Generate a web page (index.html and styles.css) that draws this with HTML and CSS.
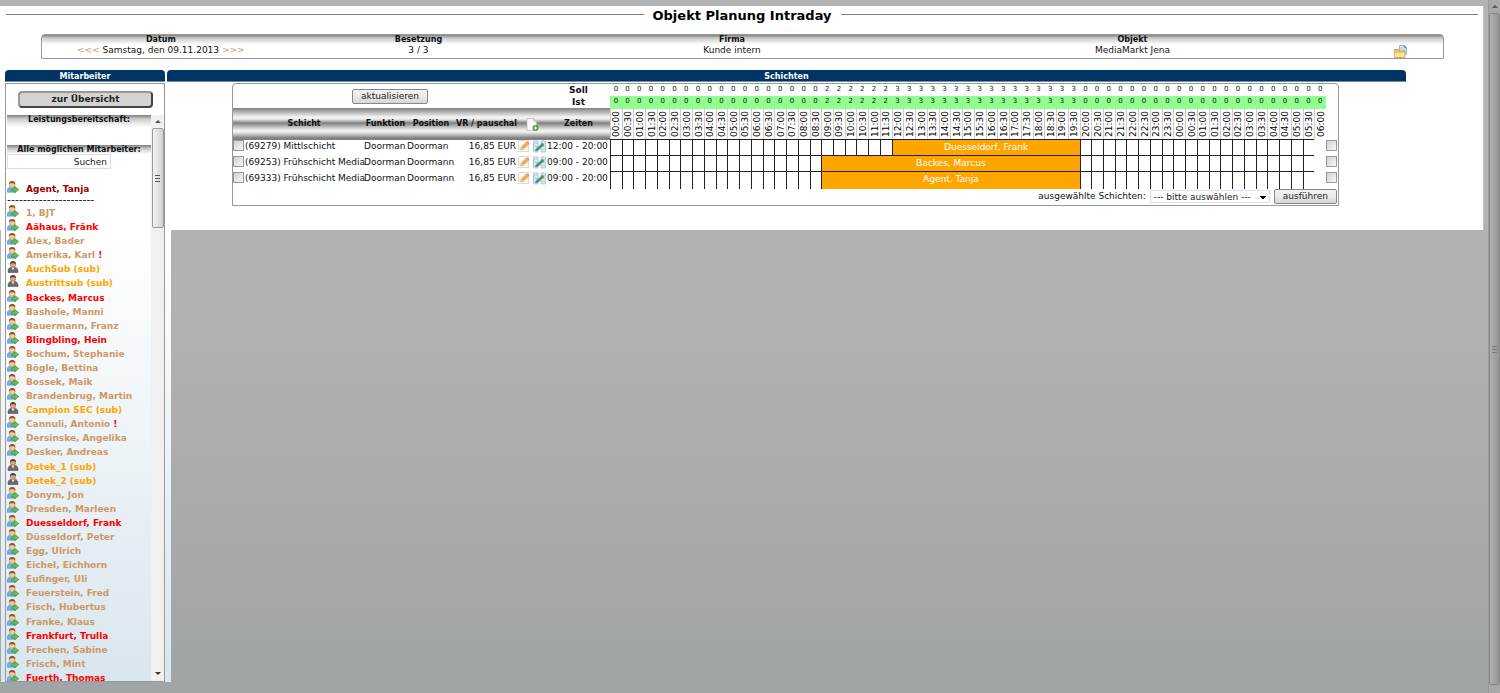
FILE: index.html
```html
<!DOCTYPE html>
<html lang="de">
<head>
<meta charset="utf-8">
<title>Objekt Planung Intraday</title>
<link rel="stylesheet" href="styles.css">
</head>
<body>
<svg class="sprite" aria-hidden="true">
  <symbol id="i-user" viewBox="0 0 12 12">
    <path d="M0.3 11.2C0 8 1.2 6.4 3 6h3.5c1.6.5 2.4 2 2.3 5.2z" fill="#6fb0ee" stroke="#3f7cc0" stroke-width=".5"/>
    <path d="M3.4 6l1.4 2.600L6.300 6z" fill="#fff"/>
    <circle cx="5.200" cy="3.600" r="2.900" fill="#f4c9a2" stroke="#a06a3c" stroke-width=".4"/>
    <path d="M2 3.600C1.800 1 3.300.1 5.200.1S8.500 1 8.300 3.500C7.300 2.200 5.800 2 5 2.200 3.800 2 2.700 2.400 2 3.600z" fill="#93531f"/>
    <path d="M4.500 7.300h3.200V5.400L11.800 8.600 7.700 11.800V10H4.500z" fill="#6cbd50" stroke="#3c8a30" stroke-width=".6"/>
  </symbol>
  <symbol id="i-sub" viewBox="0 0 12 12">
    <path d="M1 11.500C.8 8 2.200 6.600 4 6.200h4c1.800.4 3.200 1.800 3 5.300z" fill="#6a6a6a" stroke="#444" stroke-width=".5"/>
    <path d="M4.400 6.200L6 9.500l1.600-3.300z" fill="#e8e8e8"/>
    <circle cx="6" cy="3.600" r="2.700" fill="#d9a982" stroke="#6b4630" stroke-width=".4"/>
    <path d="M3 3.700C2.800 1 4.300.1 6 .1S9.100 1 9 3.600C8.300 2.300 6.800 2.200 6 2.300 4.800 2.200 3.700 2.500 3 3.700z" fill="#5f3a24"/>
  </symbol>
  <symbol id="i-new" viewBox="0 0 12 13">
    <path d="M.5.5h6.500L10 3.500v9H.5z" fill="#fbfbfb" stroke="#b5b5b5" stroke-width=".7"/>
    <path d="M7 .5v3h3z" fill="#ddd" stroke="#b5b5b5" stroke-width=".5"/>
    <circle cx="9" cy="10" r="2.700" fill="#5fa83e" stroke="#3c7d22" stroke-width=".5"/>
    <path d="M9 8.500v3M7.500 10h3" stroke="#fff" stroke-width="1"/>
  </symbol>
  <symbol id="i-edit" viewBox="0 0 12 12">
    <path d="M.5.5h10v11H.5z" fill="#fafafa" stroke="#c8c8c8" stroke-width=".7"/>
    <path d="M2.500 9.800L3.300 7.200 8.800 1.700 11 3.800 5.300 9.300z" fill="#f5b043" stroke="#c98525" stroke-width=".5"/>
    <path d="M8.300 2.200l.9-.9 2.200 2.100-.9.900z" fill="#e58a78"/>
    <path d="M2.500 9.800l.8-2.600 2 2.100z" fill="#eed9b2"/>
  </symbol>
  <symbol id="i-sheet" viewBox="0 0 13 12">
    <path d="M.5.500h4.500v11H.5zM8 .5h4.500v11H8z" fill="#d6e7f8" stroke="#86aede" stroke-width=".6"/>
    <path d="M.5 3h4.500M.5 6h4.500M.5 9h4.500M8 3h4.500M8 6h4.500M8 9h4.500" stroke="#9dbfe6" stroke-width=".6"/>
    <path d="M2.500 10.500L3.500 8 9.500 2.800 11 4.300 5 9.800z" fill="#4d9d55" stroke="#2c6f38" stroke-width=".5"/>
  </symbol>
  <symbol id="i-folder" viewBox="0 0 13 13">
    <path d="M5.500.5h5L12.500 2.500v7h-7z" fill="#c5dcf7" stroke="#6f9fdd" stroke-width=".7"/>
    <path d="M10.200.5v2.300h2.300z" fill="#3f6fb5"/>
    <path d="M.5 4.500h4l1 1.500h5.500v6.500H.5z" fill="#f0c65c" stroke="#c8962f" stroke-width=".7"/>
    <path d="M1 8h9.500v4H1z" fill="#fbe39a"/>
  </symbol>
</svg>
<div class="shell">
  <div class="page">
    <header class="title"><h1>Objekt Planung Intraday</h1></header>
    <section class="info">
      <div><b>Datum</b><p><a href="#">&lt;&lt;&lt;</a> Samstag, den 09.11.2013 <a href="#">&gt;&gt;&gt;</a></p></div>
      <div><b>Besetzung</b><p>3 / 3</p></div>
      <div><b>Firma</b><p>Kunde intern</p></div>
      <div><b>Objekt</b><p>MediaMarkt Jena</p></div>
      <div class="info-action"><button class="icon-btn" aria-label="Ordner"><svg class="ico13"><use href="#i-folder"/></svg></button></div>
    </section>
    <div class="columns">
      <aside class="sidebar">
        <h2 class="bar">Mitarbeiter</h2>
        <div class="staff">
          <button class="overview">zur Übersicht</button>
          <div class="scroller">
            <div class="staff-body">
              <h3 class="band ready">Leistungsbereitschaft:</h3>
              <h3 class="band">Alle möglichen Mitarbeiter:</h3>
              <input class="search" type="text" value="Suchen" aria-label="Suchen">
              <a class="person own" href="#"><svg class="ico"><use href="#i-user"/></svg><span>Agent, Tanja</span></a>
              <div class="dashes">----------------------</div>
              <div class="people" id="people"></div>
            </div>
            <div class="track"><i class="up"></i><i class="thumb"></i><i class="down"></i></div>
          </div>
        </div>
      </aside>
      <main class="main">
        <h2 class="bar">Schichten</h2>
        <div class="panel">
          <table class="plan">
            <thead id="head"></thead>
            <tbody id="rows"></tbody>
          </table>
          <button class="btn refresh">aktualisieren</button>
          <div class="foot">
            <label for="act">ausgewählte Schichten:</label>
            <select id="act"><option>--- bitte auswählen ---</option></select>
            <button class="btn">ausführen</button>
          </div>
        </div>
      </main>
    </div>
  </div>
  <div class="outer-track"><i class="up"></i><i class="thumb"></i></div>
</div>
<script src="script.js"></script>
</body>
</html>
```
FILE: styles.css
```css
* { box-sizing: border-box; }
body {
  margin: 0;
  height: 100vh;
  overflow: hidden;
  font: 9px/12px "DejaVu Sans", Verdana, sans-serif;
  color: #111;
  background: linear-gradient(#b3b3b3, #b1b2b2 45%, #9fa4a7);
}
h1, h2, h3, p { margin: 0; font-size: inherit; }
a { color: #cc9966; text-decoration: none; }
button, input, select { font: inherit; color: #222; }
.sprite { position: absolute; width: 0; height: 0; }
.ico { width: 12px; height: 12px; display: block; flex: none; }
.ico13 { width: 13px; height: 13px; display: block; }
.icon-btn { border: 0; background: none; padding: 0; }

.shell { display: flex; height: 100%; }
.page {
  flex: 1;
  height: 224px;
  margin: 6px 4px 0 0;
  background: #fff;
  border-right: 1px solid #c4c4c4;
}
.title { display: flex; align-items: center; gap: 9px; height: 20px; padding: 0 5px 0 6px; }
.title::before, .title::after { content: ""; flex: 1; height: 1px; background: #808080; margin-bottom: 4px; }
.title h1 { font-size: 13px; line-height: 20px; color: #000; }

.info {
  display: grid;
  grid-template-columns: 238fr 278fr 350fr 452fr 85fr;
  height: 25px;
  margin: 8px 39px 11px 41px;
  border: 1px solid #999;
  border-radius: 4px 4px 0 0;
  text-align: center;
  background: linear-gradient(#808380, #c8c8c8 3px, #f4f4f4 8px, #fff 10px);
}
.info b { display: block; font-size: 8px; line-height: 10px; }
.info p { line-height: 10px; }
.info-action { display: flex; justify-content: center; align-items: flex-end; }

.columns { display: flex; gap: 2px; padding-left: 5px; height: calc(100vh - 81px); }
.bar {
  height: 12px;
  border-radius: 4px 4px 0 0;
  background: #003366;
  border-bottom: 1px solid #6f8ba8;
  color: #fff;
  font-size: 8px;
  line-height: 13px;
  text-align: center;
}
.sidebar { width: 160px; display: flex; flex-direction: column; position: relative; }
.sidebar::before {
  content: "";
  position: absolute;
  left: -4px;
  right: -6px;
  top: 160px;
  bottom: 0;
  background: linear-gradient(#fff, #d9e6ee);
}
.staff {
  position: relative;
  flex: 1;
  min-height: 0;
  margin-top: 1px;
  display: flex;
  flex-direction: column;
  border: 1px solid #999;
  background: linear-gradient(#fff 25%, #d9e6ee);
}
.overview {
  height: 17px;
  margin: 7px 11px 7px 12px;
  padding: 0;
  border: 2px outset #999;
  border-radius: 4px;
  background: #d3d3d3;
  font-weight: bold;
  line-height: 13px;
}
.scroller { flex: 1; min-height: 0; display: flex; }
.staff-body { flex: 1; min-width: 0; overflow: hidden; padding-left: 1px; display: flex; flex-direction: column; }
.band {
  height: 9px;
  font-size: 8px;
  line-height: 10px;
  text-align: center;
  background: linear-gradient(#808080, #ccc 4px, #fff);
}
.ready { height: 12px; margin-bottom: 18px; }
.search { width: 104px; height: 15px; padding: 0 3px; border: 1px solid #dde; background: #fff; text-align: right; }
.person { display: flex; gap: 7px; font-weight: bold; color: #cc9966; white-space: nowrap; }
.person span { padding-top: 2px; }
.person em { font-style: normal; color: #f00020; }
.own { margin-top: 12px; color: #900; }
.dashes { height: 10px; line-height: 9px; font-size: 11px; }
.people { flex: 1; min-height: 0; display: grid; grid-auto-rows: 1fr; margin-bottom: -3px; }
.people .person { height: 14px; }
.people .red { color: #f00; }
.people .orange { color: #ffa500; }
.track { width: 13px; background: #f0f0f0; display: flex; flex-direction: column; align-items: center; }
.up, .down { width: 0; height: 0; border: 3px solid transparent; }
.up { border-bottom-color: #555; margin: 2px 0 5px; }
.down { border-top-color: #333; margin: auto 0 3px; }
.thumb {
  width: 12px;
  height: 100px;
  border: 1px solid #999;
  border-radius: 2px;
  background: repeating-linear-gradient(#555 0 1px, transparent 1px 3px) center / 5px 7px no-repeat, linear-gradient(90deg, #f4f4f4, #d0d0d4);
}

.main { flex: 1; min-width: 0; padding-right: 77px; }
.panel {
  position: relative;
  margin: 1px 67px 0 65px;
  border: 1px solid #999;
  border-radius: 4px 4px 0 0;
}
.plan { display: block; }
.plan thead, .plan tbody { display: block; }
.plan tr {
  display: grid;
  grid-template-columns: 12px 119px 43px 48px 63px 15px 14px 63px repeat(61, minmax(0, 1fr)) 12px;
}
.plan td, .plan th { padding: 0; white-space: nowrap; }
.counts { height: 12px; }
.counts th { font-size: 9px; line-height: 13px; text-align: center; grid-column: 8; }
.counts td { font-size: 7px; line-height: 11px; text-align: center; }
.counts .on { background: #90ff90; }
.times { height: 31px; }
.times .h {
  font-size: 8px;
  line-height: 32px;
  text-align: center;
  background: linear-gradient(#808080, #f4f4f4 9px, #eee 11px, #808080 15px, #eee 22px, #f0f0f0 24px, #808080 30px);
}
.times .h svg { margin: 10px auto 0; }
.wide { grid-column: span 2; }
.slot { display: flex; align-items: center; justify-content: center; border-left: 1px solid #ccc; }
.slot span { writing-mode: vertical-rl; transform: rotate(180deg); font-weight: normal; font-size: 9px; line-height: 10px; color: #000; }
.shift { height: 16px; line-height: 14px; }
.shift .cell, .shift .work { border-left: 1px solid #222; border-top: 1px solid #222; }
.shift .work { background: #ffa500; color: #fff; text-align: center; }
.shift .num { text-align: right; padding-right: 2px; }
.shift svg { margin-top: 1px; }
.shift input {
  appearance: none;
  display: block;
  width: 11px;
  height: 11px;
  margin: 1px 0 0;
  border: 1px solid #999;
  background: linear-gradient(135deg, #ccd0d6, #f8f8f8);
}
.btn {
  height: 15px;
  padding: 0 8px;
  border: 1px solid #888;
  border-radius: 2px;
  background: linear-gradient(#f3f3f3, #ebebeb 50%, #d5d5d5);
  line-height: 13px;
}
.refresh { position: absolute; left: 119px; top: 5px; }
.foot { display: flex; justify-content: flex-end; align-items: center; gap: 4px; height: 18px; padding-right: 1px; }
.foot select {
  appearance: none;
  width: 120px;
  height: 13px;
  padding: 0 3px;
  border: 1px solid #dde;
  background: linear-gradient(#000, #000) 109px 5px / 6px 1px no-repeat, linear-gradient(#000, #000) 110px 6px / 4px 1px no-repeat, linear-gradient(#000, #000) 111px 7px / 2px 1px no-repeat, #fff;
}
.outer-track {
  width: 12px;
  display: flex;
  flex-direction: column;
  align-items: center;
  background: #a9a9a9;
  border-left: 1px solid #999;
}
.outer-track .thumb {
  flex: 1;
  width: 11px;
  height: auto;
  margin-bottom: 8px;
  border-color: #888;
  background: repeating-linear-gradient(#777 0 1px, transparent 1px 3px) center / 5px 7px no-repeat, linear-gradient(90deg, #b0b0b0, #949494);
}
```
FILE: script.js
```js
const people = `1, BJT|t
Aähaus, Fränk|r
Alex, Bader|t
Amerika, Karl|t!
AuchSub (sub)|s
Austrittsub (sub)|s
Backes, Marcus|r
Bashole, Manni|t
Bauermann, Franz|t
Blingbling, Hein|r
Bochum, Stephanie|t
Bögle, Bettina|t
Bossek, Maik|t
Brandenbrug, Martin|t
Campion SEC (sub)|s
Cannuli, Antonio|t!
Dersinske, Angelika|t
Desker, Andreas|t
Detek_1 (sub)|s
Detek_2 (sub)|s
Donym, Jon|t
Dresden, Marleen|t
Duesseldorf, Frank|r
Düsseldorf, Peter|t
Egg, Ulrich|t
Eichel, Eichhorn|t
Eufinger, Uli|t
Feuerstein, Fred|t
Fisch, Hubertus|t
Franke, Klaus|t
Frankfurt, Trulla|r
Frechen, Sabine|t
Frisch, Mint|t
Fuerth, Thomas|r`.split('\n');

document.getElementById('people').innerHTML = people.map(line => {
  const [name, kind] = line.split('|');
  const cls = kind[0] === 'r' ? ' red' : kind[0] === 's' ? ' orange' : '';
  const icon = kind[0] === 's' ? 'i-sub' : 'i-user';
  const mark = kind.endsWith('!') ? ' <em>!</em>' : '';
  return `<a class="person${cls}" href="#"><svg class="ico"><use href="#${icon}"/></svg><span>${name}${mark}</span></a>`;
}).join('');

const slots = Array.from({ length: 61 }, (_, i) => i);
const staffed = i => (i >= 18 && i < 24 ? 2 : i >= 24 && i < 40 ? 3 : 0);
const label = i => String(Math.floor(i / 2) % 24).padStart(2, '0') + (i % 2 ? ':30' : ':00');
const counts = (name, cls) => `<tr class="counts"><th>${name}</th>${slots.map(i => `<td class="${cls}">${staffed(i)}</td>`).join('')}</tr>`;

document.getElementById('head').innerHTML = counts('Soll', '') + counts('Ist', 'on') +
  `<tr class="times"><th class="h wide">&nbsp;&nbsp;&nbsp;&nbsp;Schicht</th><th class="h">Funktion</th><th class="h">Position</th><th class="h">VR / pauschal</th><th class="h wide"><svg class="ico13"><use href="#i-new"/></svg></th><th class="h">Zeiten</th>` +
  slots.map(i => `<th class="slot"><span>${label(i)}</span></th>`).join('') + '</tr>';

const shifts = [
  ['(69279) Mittlschicht', 'Doorman', '12:00 - 20:00', 24, 'Duesseldorf, Frank'],
  ['(69253) Frühschicht Media', 'Doormann', '09:00 - 20:00', 18, 'Backes, Marcus'],
  ['(69333) Frühschicht Media', 'Doormann', '09:00 - 20:00', 18, 'Agent, Tanja']
];
const cells = n => '<td class="cell"></td>'.repeat(n);
document.getElementById('rows').innerHTML = shifts.map(([name, pos, time, from, who]) =>
  `<tr class="shift"><td><input type="checkbox" aria-label="${name}"></td><td>${name}</td><td>Doorman</td><td>${pos}</td><td class="num">16,85 EUR</td>` +
  `<td><button class="icon-btn" aria-label="Bearbeiten"><svg class="ico"><use href="#i-edit"/></svg></button></td><td><button class="icon-btn" aria-label="Tabelle"><svg class="ico13"><use href="#i-sheet"/></svg></button></td><td>${time}</td>` +
  cells(from) + `<td class="work" style="grid-column: span ${40 - from}">${who}</td>` + cells(20) +
  `<td></td><td><input type="checkbox" aria-label="${who}"></td></tr>`).join('');
```
